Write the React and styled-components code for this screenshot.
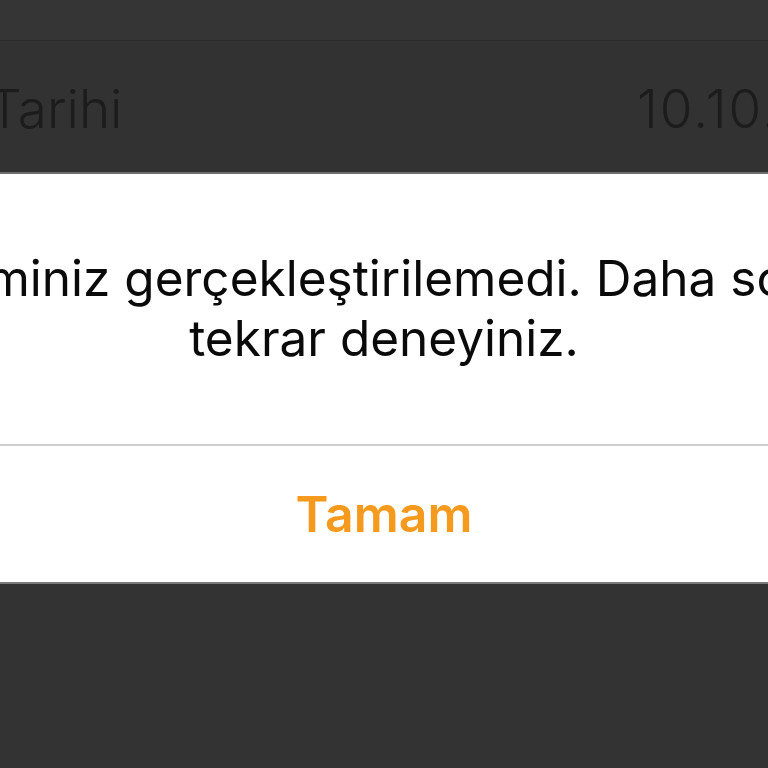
import React from "react"
import styled, { createGlobalStyle } from "styled-components"

const GlobalStyle = createGlobalStyle`
  html, body {
    margin: 0;
    padding: 0;
    background: #333333;
  }
`

const Screen = styled.div`
  width: 768px;
  height: 768px;
  overflow: hidden;
  display: flex;
  flex-direction: column;
  background: #333333;
  font-family: Inter, "Noto Sans", sans-serif;
`

const TopBar = styled.div`
  height: 40px;
  flex-shrink: 0;
  background: #353535;
  border-bottom: 1px solid #2c2c2c;
`

const Row = styled.div`
  height: 131px;
  flex-shrink: 0;
  display: flex;
  align-items: center;
  background: #323232;
  border-bottom: 2px solid #6e6e6e;
  color: #1c1c1c;
  font-size: 53px;
  font-weight: 300;
  white-space: nowrap;
  overflow: hidden;
`

const Label = styled.span`
  width: 649px;
  margin-left: -12px;
  flex-shrink: 0;
  margin-top: 4px;
`

const Value = styled.span`
  flex-shrink: 0;
  margin-top: 4px;
  letter-spacing: 2px;
`

const Alert = styled.div`
  flex-shrink: 0;
  background: #ffffff;
  display: flex;
  flex-direction: column;
  border-bottom: 2px solid #7a7a7a;
`

const Message = styled.div`
  height: 270px;
  display: flex;
  flex-direction: column;
  align-items: center;
  justify-content: center;
  padding-bottom: 2px;
  box-sizing: border-box;
  color: #0a0a0a;
  font-size: 49.5px;
  line-height: 60px;
  overflow: hidden;
`

const Line = styled.div`
  white-space: nowrap;
`

const Divider = styled.div`
  height: 2px;
  background: #cfcfcf;
`

const Button = styled.button`
  height: 136px;
  border: 0;
  background: transparent;
  display: flex;
  align-items: center;
  justify-content: center;
  color: #f59a1c;
  font-family: Inter, "Noto Sans", sans-serif;
  font-weight: 600;
  font-size: 50px;
  cursor: pointer;
`

export default function App() {
  return (
    <Screen>
      <GlobalStyle />
      <TopBar />
      <Row>
        <Label>Tarihi</Label>
        <Value>10.10.2018</Value>
      </Row>
      <Alert>
        <Message>
          <Line>İşleminiz gerçekleştirilemedi. Daha sonra</Line>
          <Line>tekrar deneyiniz.</Line>
        </Message>
        <Divider />
        <Button>Tamam</Button>
      </Alert>
    </Screen>
  )
}
